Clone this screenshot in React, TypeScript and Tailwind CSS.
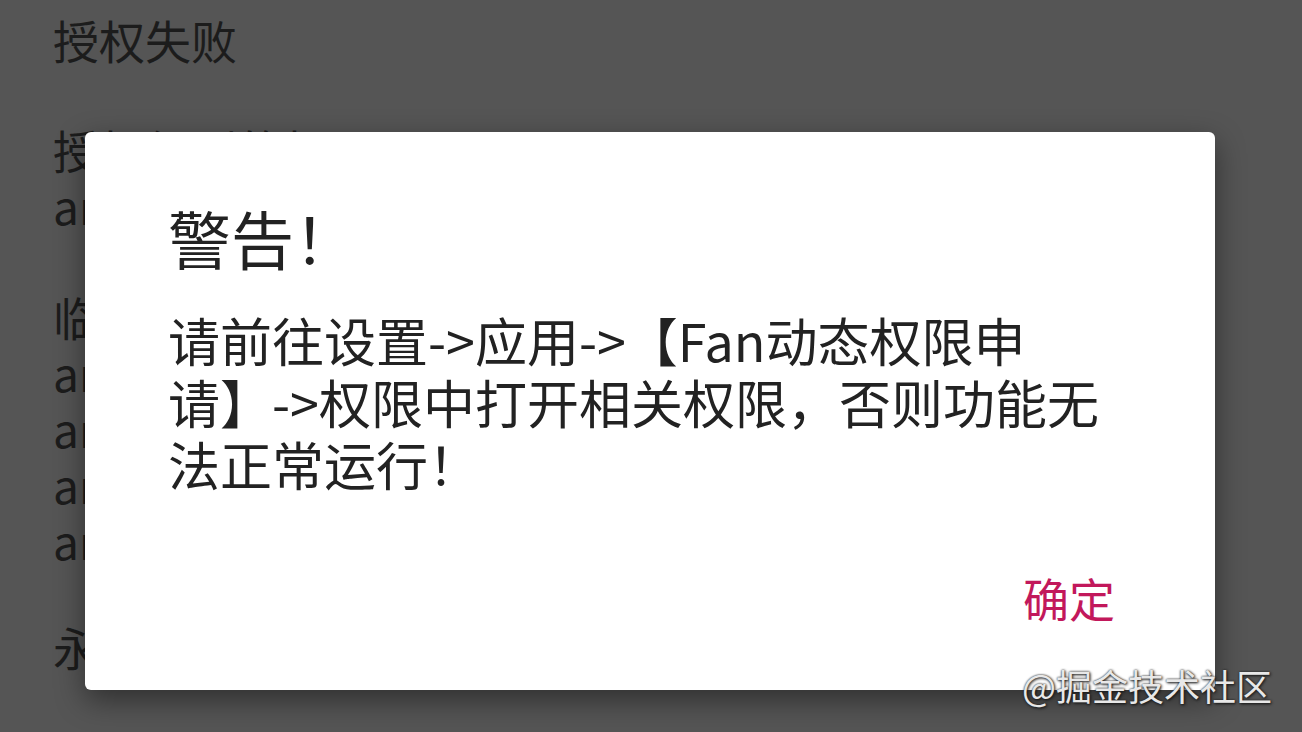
import React from 'react';

const cjk = '"Noto Sans CJK SC", "Noto Sans", sans-serif';

const paragraphs: { lines: string[]; gap: string }[] = [
  { lines: ['授权失败'], gap: 'mt-0' },
  { lines: ['授权得到的权限：', 'android.permission.CAMERA'], gap: 'mt-[54px]' },
  {
    lines: [
      '临时拒绝的权限：',
      'android.permission.READ_CONTACTS',
      'android.permission.CALL_PHONE',
      'android.permission.ACCESS_FINE_LOCATION',
      'android.permission.RECORD_AUDIO',
    ],
    gap: 'mt-[55px]',
  },
  { lines: ['永久拒绝的权限：'], gap: 'mt-[50px]' },
];

export default function App() {
  return (
    <main
      className="relative h-[732px] w-[1302px] overflow-hidden bg-[#555555] text-[#1c1c1c]"
      style={{ fontFamily: cjk }}
    >
      <div className="flex flex-col pl-[53px] pt-[11px] text-[46px] leading-[56px]">
        {paragraphs.map((para, i) => (
          <div key={i} className={`flex flex-col ${para.gap}`}>
            {para.lines.map((line) => (
              <p key={line} className="whitespace-nowrap">{line}</p>
            ))}
          </div>
        ))}
      </div>

      <div className="absolute left-[85px] top-[132px] flex h-[558px] w-[1130px] flex-col rounded-[6px] bg-white shadow-[0_10px_30px_rgba(0,0,0,0.45)]">
        <h1 className="pl-[83px] pt-[66px] text-[63px] leading-[78px] text-[#222]">警告！</h1>
        <p className="mt-[33px] ml-[83px] w-[940px] text-[52px] leading-[62px] text-[#222]">
          请前往设置-&gt;应用-&gt;【Fan动态权限申请】-&gt;权限中打开相关权限，否则功能无法正常运行！
        </p>
        <div className="mt-auto flex justify-end pb-[65px] pr-[100px]">
          <button className="text-[46px] leading-[56px] text-[#c2185b]">确定</button>
        </div>
      </div>

      <div className="absolute left-[1022px] top-[663px] whitespace-nowrap text-[36px] leading-[44px] text-[#e8e8e8] [text-shadow:0_0_2px_#222,1px_1px_3px_#111]">
        @掘金技术社区
      </div>
    </main>
  );
}
